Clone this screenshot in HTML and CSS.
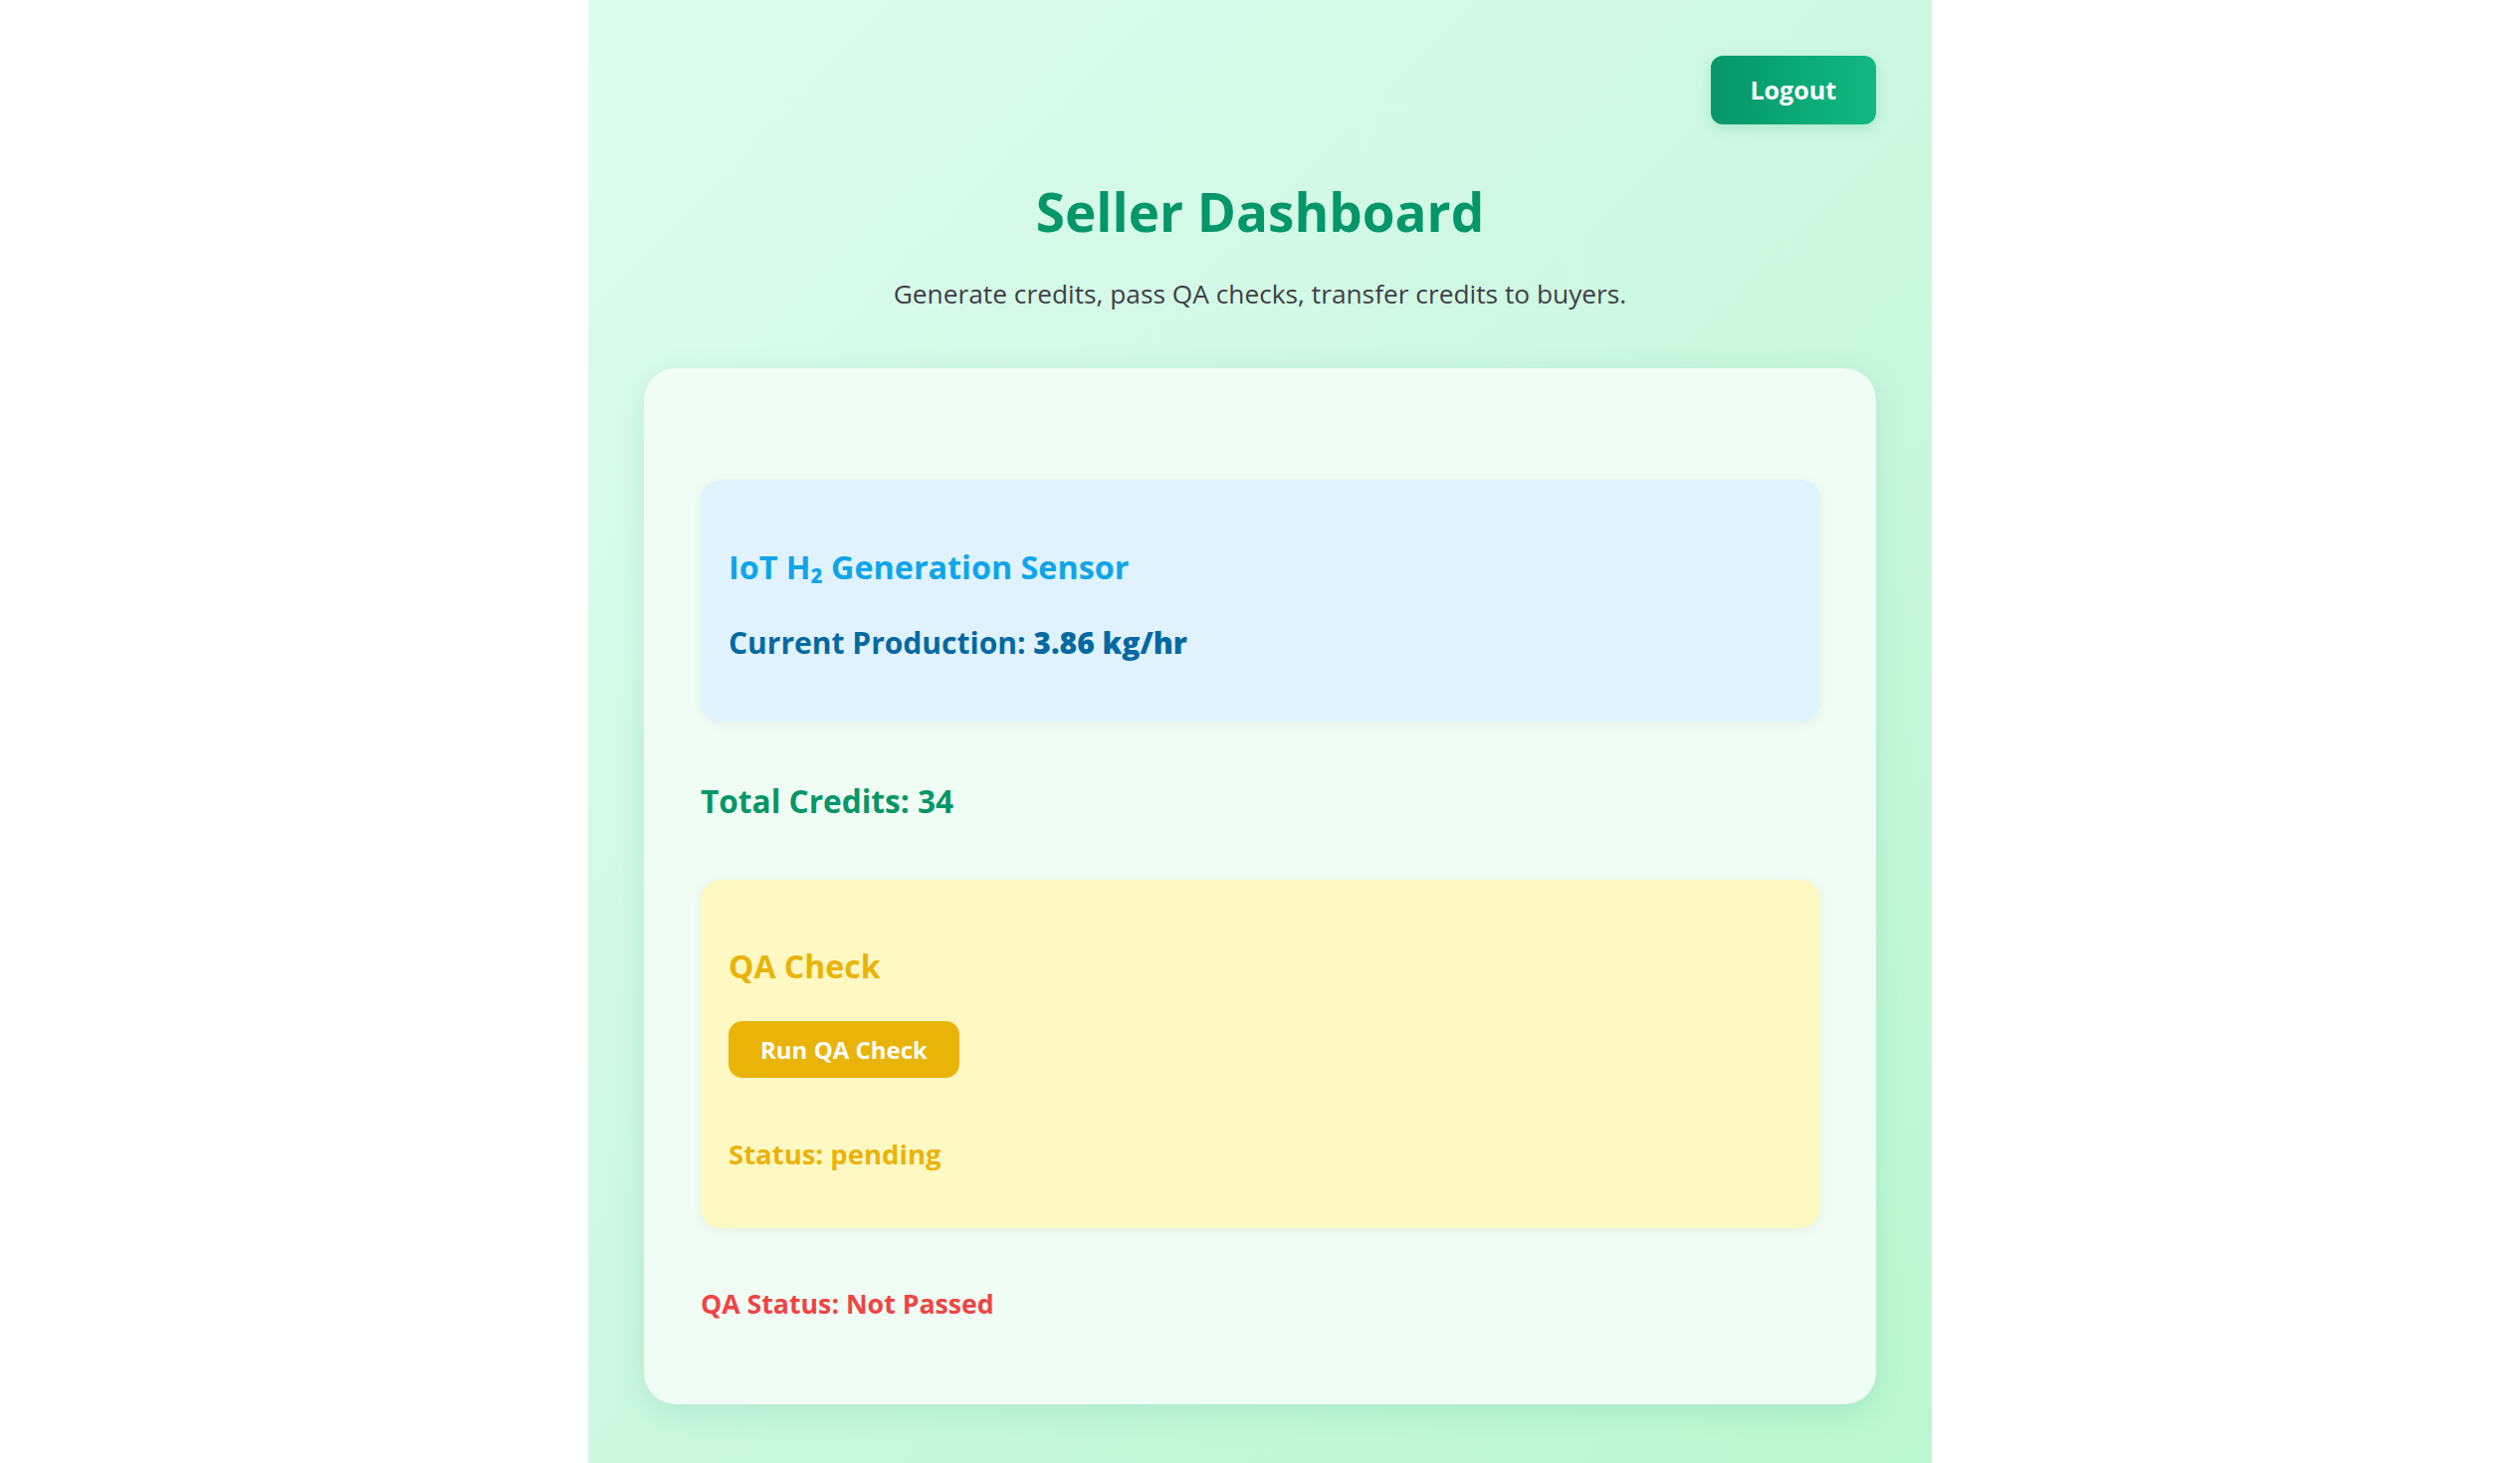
FILE: index.html
```html
<!DOCTYPE html>
<html lang="en">
<head>
<meta charset="utf-8">
<title>Seller Dashboard</title>
<link rel="stylesheet" href="styles.css">
</head>
<body>
<div class="page">
  <header class="topbar">
    <button class="logout">Logout</button>
  </header>
  <h1 class="title">Seller Dashboard</h1>
  <p class="subtitle">Generate credits, pass QA checks, transfer credits to buyers.</p>
  <main class="card">
    <section class="sensor">
      <h3 class="sensor-title">IoT H₂ Generation Sensor</h3>
      <p class="production">Current Production: <strong>3.86 kg/hr</strong></p>
    </section>
    <h3 class="credits">Total Credits: 34</h3>
    <section class="qa">
      <h3 class="qa-title">QA Check</h3>
      <button class="qa-btn">Run QA Check</button>
      <p class="qa-status">Status: pending</p>
    </section>
    <p class="qa-overall">QA Status: Not Passed</p>
  </main>
</div>
</body>
</html>
```

FILE: styles.css
```css
* { box-sizing: border-box; }
html, body { margin: 0; padding: 0; background: #ffffff; }
body { font-family: "Open Sans", "Noto Sans", sans-serif; }

.page {
  width: 1350px;
  margin: 0 auto;
  min-height: 100vh;
  padding: 56px 56px 56px;
  background: linear-gradient(135deg, #ddfcf0 0%, #cdf8e1 50%, #bbf7d0 100%);
}

.topbar { display: flex; justify-content: flex-end; }

.logout {
  font-family: inherit;
  font-size: 25px;
  font-weight: 700;
  line-height: 33px;
  color: #ffffff;
  border: none;
  border-radius: 12px;
  padding: 18px 40px;
  background: linear-gradient(90deg, #059669 0%, #10b981 100%);
  box-shadow: 0 4px 14px rgba(5, 150, 105, 0.18);
}

.title {
  margin: 54px 0 0;
  text-align: center;
  font-size: 53px;
  line-height: 68px;
  font-weight: 700;
  color: #059669;
}

.subtitle {
  margin: 28px 0 0;
  text-align: center;
  font-size: 26.3px;
  line-height: 40px;
  color: #3f3f46;
}

.card {
  display: block;
  margin-top: 55px;
  background: #f0fdf4;
  border-radius: 32px;
  padding: 56px 56px 81px 57px;
  box-shadow: 0 8px 32px rgba(5, 150, 105, 0.14);
}

.sensor {
  margin-top: 56px;
  background: #e0f2fe;
  border-radius: 20px;
  padding: 64px 28px 58px;
  box-shadow: 0 2px 12px rgba(0, 0, 0, 0.05);
}

.sensor-title {
  margin: 0;
  font-size: 32.3px;
  line-height: 46px;
  font-weight: 700;
  color: #0ea5e9;
}

.production {
  margin: 33px 0 0;
  font-size: 30px;
  line-height: 42px;
  font-weight: 700;
  color: #0369a1;
}
.production strong { font-weight: 800; }

.credits {
  margin: 58px 0 0;
  font-size: 31.6px;
  line-height: 44px;
  font-weight: 700;
  color: #059669;
}

.qa {
  margin-top: 57px;
  background: #fef9c3;
  border-radius: 20px;
  padding: 64px 28px 54px;
  box-shadow: 0 2px 12px rgba(0, 0, 0, 0.05);
}

.qa-title {
  margin: 0;
  font-size: 32px;
  line-height: 46px;
  font-weight: 700;
  color: #eab308;
}

.qa-btn {
  display: block;
  margin-top: 32px;
  font-family: inherit;
  font-size: 24px;
  font-weight: 700;
  line-height: 33px;
  color: #ffffff;
  background: #eab308;
  border: none;
  border-radius: 14px;
  padding: 12px 32px;
}

.qa-status {
  margin: 57px 0 0;
  font-size: 27.5px;
  line-height: 40px;
  font-weight: 700;
  color: #eab308;
}

.qa-overall {
  margin: 56px 0 0;
  font-size: 26.7px;
  line-height: 40px;
  font-weight: 700;
  color: #ef4444;
}
```
